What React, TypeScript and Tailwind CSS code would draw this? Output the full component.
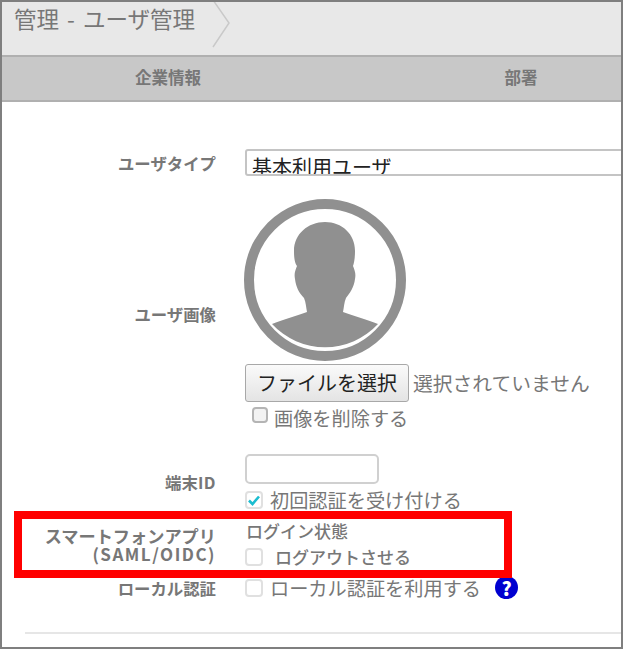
const Box = ({ checked = false, dark = false }: { checked?: boolean; dark?: boolean }) => {
  return (
    <span
      className={`flex shrink-0 items-center justify-center rounded-[4px] border-2 ${
        dark ? 'w-[16px] h-[16px] border-[#b4b4b4] bg-[#f2f2f2]' : 'w-[18px] h-[18px] border-[#e0e0e0] bg-white'
      }`}
    >
      {checked && (
        <svg width="14" height="14" viewBox="0 0 14 14">
          <path d="M2 7.5 L5.5 11 L12 3.5" fill="none" stroke="#1bbdd0" strokeWidth="2.6" />
        </svg>
      )}
    </span>
  );
};

const Avatar = () => {
  return (
    <svg width="162" height="162" viewBox="0 0 162 162" className="block -ml-px">
      <circle cx="81" cy="81" r="76" fill="#fff" stroke="#909090" strokeWidth="10" />
      <path
        d="M81 23 C98 23 111 35 111 52 C111 60 110 64 109 67 C111 72 112 75 111 80 C110 88 106 94 102 99 C100 104 100 108 99 113 C110 117 124 121 134 125 A72 72 0 0 1 28 125 C38 121 52 117 63 113 C62 108 62 104 60 99 C55 94 52 88 51 80 C50 75 51 72 53 67 C51 64 50 60 50 52 C50 35 64 23 81 23 Z"
        fill="#909090"
      />
    </svg>
  );
};

const labelClass = "w-[214px] shrink-0 text-right font-bold text-[#777] text-[16.4px] leading-[18px]";

export default function App() {
  return (
    <div
      className="relative w-[623px] h-[649px] overflow-hidden border-2 border-[#7f7f7f] bg-white text-[#777]"
      style={{ fontFamily: '"Noto Sans CJK JP", "Liberation Sans", sans-serif' }}
    >
      <header className="flex h-[53px] items-start bg-[#e8e8e8]">
        <h1 className="pl-[12px] text-[22.5px] leading-[33px] [word-spacing:3px] whitespace-nowrap">管理 - ユーザ管理</h1>
        <svg width="20" height="50" viewBox="0 0 20 50" className="ml-[17px] -mt-[2px] shrink-0">
          <path d="M1 0 L17 23 L1 47" fill="none" stroke="#c9c9c9" strokeWidth="1.5" />
        </svg>
      </header>

      <nav className="flex h-[47px] items-center border-y-2 border-[#b0b0b0] bg-[#c8c8c8] pb-[3px] font-bold text-[16.5px]">
        <div className="w-[332px] shrink-0 text-center">企業情報</div>
        <div className="w-[374px] shrink-0 text-center">部署</div>
      </nav>

      <form className="pt-[47px]">
        <div className="flex items-center gap-[29px]">
          <label className={labelClass}>ユーザタイプ</label>
          <div className="h-[27px] w-[400px] shrink-0 overflow-hidden rounded-[3px] border-2 border-[#c4c4c4] pl-[5px] text-[20px] leading-[32px] text-[#222]">
            基本利用ユーザ
          </div>
        </div>

        <div className="mt-[23px] flex items-center gap-[29px]">
          <label className={labelClass}>ユーザ画像</label>
          <div>
            <Avatar />
            <div className="mt-[3px] flex items-center gap-[4px]">
              <button type="button" className="h-[38px] w-[164px] rounded-[3px] border border-[#a8a8a8] bg-gradient-to-b from-[#fafafa] to-[#e4e4e4] text-[20px] text-[#222]">
                ファイルを選択
              </button>
              <span className="text-[19.8px] whitespace-nowrap">選択されていません</span>
            </div>
            <div className="mt-[5px] flex h-[22px] items-start gap-[6px] pl-[7px]">
              <Box dark />
              <span className="text-[19.2px] leading-[22px]">画像を削除する</span>
            </div>
          </div>
        </div>

        <div className="mt-[25px] flex items-center gap-[29px]">
          <label className={labelClass}>
            端末<span className="tracking-[0.5px]">ID</span>
          </label>
          <div>
            <div className="h-[30px] w-[134px] rounded-[5px] border-2 border-[#d0d0d0]"></div>
            <div className="mt-[6px] flex h-[20px] items-center gap-[7px]">
              <Box checked />
              <span className="text-[19.2px] leading-[20px]">初回認証を受け付ける</span>
            </div>
          </div>
        </div>

        <div className="mt-[11px] flex items-start gap-[29px]">
          <label className={`${labelClass} mt-[6px]`}>
            <span className="block text-[17.2px]">スマートフォンアプリ</span>
            <span className="block text-[17px] tracking-[1.5px]">(SAML/OIDC)</span>
          </label>
          <div>
            <div className="pl-[1px] text-[17px] font-medium leading-[20px]">ログイン状態</div>
            <div className="mt-[7px] flex h-[18px] items-center gap-[12px]">
              <Box />
              <span className="text-[17px] font-medium leading-[18px]">ログアウトさせる</span>
            </div>
          </div>
        </div>

        <div className="mt-[10px] flex items-center gap-[29px]">
          <label className={labelClass}>ローカル認証</label>
          <div className="flex items-center">
            <Box />
            <span className="ml-[7px] text-[19.2px] leading-[18px] whitespace-nowrap">ローカル認証を利用する</span>
            <span className="ml-[14px] flex h-[23px] w-[23px] items-center justify-center rounded-full bg-[#0000d0] text-[19px] font-black leading-none text-white">?</span>
          </div>
        </div>

        <hr className="ml-[23px] mt-[33px] border-t-2 border-[#e6e6e6]" />
      </form>

      {/* red highlight over the smartphone row */}
      <div className="absolute left-[12px] top-[509px] h-[67px] w-[498px] border-[8px] border-[#ff0000]"></div>
    </div>
  );
}
